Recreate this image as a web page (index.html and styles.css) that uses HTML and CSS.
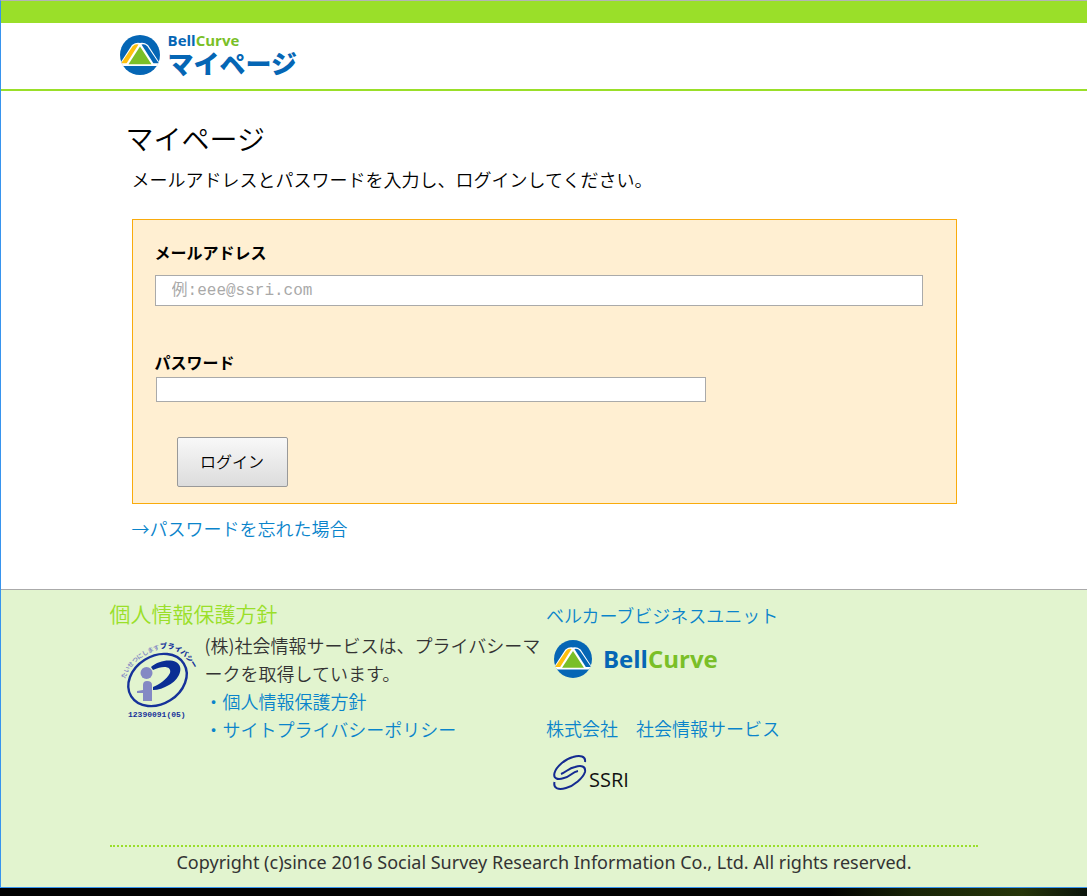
FILE: index.html
```html
<!DOCTYPE html>
<html lang="ja">
<head>
<meta charset="utf-8">
<meta name="viewport" content="width=device-width, initial-scale=1">
<title>マイページ | BellCurve</title>
<link rel="stylesheet" href="styles.css">
</head>
<body>
<svg class="symbols" aria-hidden="true">
  <defs>
    <clipPath id="disc"><circle cx="20" cy="20" r="20"/></clipPath>
  </defs>
  <symbol id="bell" viewBox="0 0 40 40">
    <g clip-path="url(#disc)">
      <rect width="40" height="40" fill="#0566b5"/>
      <path d="M-1 30 L12 10 Q16 7 20 8 Q24 7 28 10 L41 30 Z" fill="#fff"/>
      <path d="M2 27 L12.500 11.500 Q15 8.500 18.500 9.500 L6.500 28.500 H1 Z" fill="#fdc00f"/>
      <path d="M21.500 9.500 Q25 8.500 27.500 11.500 L39 28.500 H33.500 Z" fill="#0566b5"/>
      <path d="M0 28.500 H40 V31 H0 Z" fill="#fff"/>
      <path d="M20 11.500 L31.500 29.300 H8.500 Z" fill="#7abf28"/>
    </g>
  </symbol>
</svg>
<div class="page">
  <header class="header">
    <div class="container">
      <a class="logo" href="#">
        <svg class="logo-mark" aria-hidden="true"><use href="#bell"/></svg>
        <span class="logo-text">
          <span class="logo-brand">Bell<span class="green">Curve</span></span>
          <span class="logo-title">マイページ</span>
        </span>
      </a>
    </div>
  </header>
  <main class="main container">
    <h1 class="title">マイページ</h1>
    <div class="content">
      <p class="lead">メールアドレスとパスワードを入力し、ログインしてください。</p>
      <form class="login">
        <label class="label" for="email">メールアドレス</label>
        <input class="field" id="email" type="email" placeholder="例:eee@ssri.com">
        <label class="label label-next" for="password">パスワード</label>
        <input class="field field-password" id="password" type="password">
        <button class="submit" type="submit">ログイン</button>
      </form>
      <a class="forgot" href="#">→パスワードを忘れた場合</a>
    </div>
  </main>
  <footer class="footer">
    <div class="container">
      <div class="columns">
        <section class="column">
          <h2 class="heading">個人情報保護方針</h2>
          <div class="privacy">
            <svg class="privacy-mark" viewBox="0 0 90 90" role="img" aria-label="プライバシーマーク">
              <defs>
                <path id="arc-left" d="M10 45 Q17 23 48 14"/>
                <path id="arc-right" d="M45 15 Q67 11 80 38"/>
              </defs>
              <text class="mark-light"><textPath href="#arc-left">たいせつにします</textPath></text>
              <text class="mark-bold"><textPath href="#arc-right">プライバシー</textPath></text>
              <ellipse cx="42.500" cy="46" rx="31" ry="24" transform="rotate(-32 42.500 46)" fill="none" stroke="#16329a" stroke-width="2.400"/>
              <path d="M36 33 C43 27 54 25 61 28 C70 33 64 46 54 51 C49 54 43 56 38 56 L38 53 C44 51 52 45 55 39 C57 32 48 31 38 36 Z" fill="#0b2e94"/>
              <circle cx="31.500" cy="39" r="6" fill="#8489c4"/>
              <path d="M28 51 Q28 47 32 47 Q37 47 37 51 V67 H28 V59 H22 V57 L28 56 Z" fill="#8489c4"/>
              <text class="mark-number" x="13" y="83">12390091(05)</text>
            </svg>
            <div class="privacy-text">
              <p class="privacy-line">(株)社会情報サービスは、プライバシーマークを取得しています。</p>
              <a class="privacy-link" href="#">・個人情報保護方針</a>
              <a class="privacy-link" href="#">・サイトプライバシーポリシー</a>
            </div>
          </div>
        </section>
        <section class="column column-units">
          <a class="unit" href="#">ベルカーブビジネスユニット</a>
          <a class="brand" href="#">
            <svg class="brand-mark" viewBox="0 0 40 40" aria-hidden="true"><use href="#bell"/></svg>
            <span>Bell<span class="green">Curve</span></span>
          </a>
          <a class="unit unit-next" href="#">株式会社　社会情報サービス</a>
          <a class="ssri" href="#">
            <svg class="ssri-mark" viewBox="0 0 34 38" aria-hidden="true" fill="none" stroke="#142b91" stroke-width="2">
              <path d="M32 8 C33 2 27 1 20 3 C12 5 3 13 1.500 19 C0 25 5 26 11 24 C17 23 19 18 25 17"/>
              <path d="M1.500 28 C0 35 6 36 13 34 C21 32 30 24 32 18 C33 12 28 11 22 13 C16 14 13 18 8 20"/>
            </svg>
            <span class="ssri-name">SSRI</span>
          </a>
        </section>
      </div>
      <p class="copyright">Copyright (c)since 2016 Social Survey Research Information Co., Ltd. All rights reserved.</p>
    </div>
  </footer>
</div>
</body>
</html>
```
FILE: styles.css
```css
* { box-sizing: border-box; }

body {
  margin: 0;
  min-height: 100vh;
  background: linear-gradient(90deg, #000 76%, #182407 84%, #263509 94%, #0b140b);
  color: #000;
  font-family: "Noto Sans CJK JP", sans-serif;
  font-size: 18px;
  font-weight: 350;
  line-height: 28px;
}

h1, h2, p { margin: 0; font-weight: inherit; }
a { color: #0a84cb; text-decoration: none; }

.symbols { position: absolute; width: 0; height: 0; }
.green { color: #7abf28; }

.page {
  background: #fff;
  border-top: 1px solid #b4b4b4;
  border-left: 1px solid #3794ee;
  border-bottom: 1px solid #3794ee;
}

.container { width: 80%; margin: 0 auto; }

.header {
  border-top: 22px solid #9adf29;
  border-bottom: 2px solid #9adf29;
}

.logo {
  display: flex;
  gap: 8px;
  padding: 7px 0 11px 10px;
  color: #0566b5;
  font-weight: 700;
}
.logo-mark { width: 40px; height: 40px; margin-top: 5px; }
.logo-text { display: flex; flex-direction: column; }
.logo-brand {
  font-family: "Open Sans", sans-serif;
  font-size: 15px;
  font-weight: 700;
  line-height: 20px;
}
.logo-title { font-size: 26px; line-height: 26px; font-weight: 900; }

.logo-text { height: 48px; }

.main { padding: 27px 0 47px; }
.title { padding-left: 16px; font-size: 28px; line-height: 40px; }
.content { padding: 7px 21px 0 22px; }

.login {
  display: flex;
  flex-direction: column;
  align-items: flex-start;
  margin: 26px 0 10px;
  padding: 20px 33px 16px 22px;
  background: #ffefd2;
  border: 1px solid #f9ab0c;
}
.label { font-size: 16px; line-height: 24px; font-weight: 700; }
.label-next { margin-top: 44px; }
.field {
  width: 100%;
  height: 31px;
  margin-top: 11px;
  padding: 0 16px;
  background: #fff;
  border: 1px solid #aaa;
  border-radius: 0;
  font-family: "Liberation Mono", "Noto Sans CJK JP", monospace;
  font-size: 16px;
}
.field::placeholder { color: #a9a9a9; opacity: 1; }
.field-password { width: 550px; max-width: 100%; height: 25px; margin: 3px 0 0 1px; }
.submit {
  min-width: 111px;
  height: 50px;
  margin: 35px 0 0 22px;
  padding: 0 22px 3px;
  background: linear-gradient(#f8f8f8, #dcdcdc);
  border: 1px solid #999;
  border-radius: 2px;
  color: #000;
  font: inherit;
  font-size: 16px;
}
.forgot { display: block; }

.footer {
  padding: 7px 0 10px;
  background: #e2f4cf;
  border-top: 1px solid #aaa;
  color: #333;
}
.columns { display: flex; }
.column { width: 50%; }
.column-units { padding: 4px 0 0 2px; }
.heading { color: #9adf29; font-size: 21px; line-height: 32px; }

.privacy { display: flex; align-items: flex-start; padding: 2px 0 0 5px; }
.privacy-mark { flex: none; width: 90px; height: 90px; margin-top: 3px; overflow: visible; }
.privacy-text { display: flex; flex-direction: column; }
.privacy-line { line-break: anywhere; }
.mark-light { fill: #8489c4; font-size: 6px; font-weight: 700; }
.mark-bold { fill: #16329a; font-size: 7px; font-weight: 900; }
.mark-number { fill: #16329a; font: 700 8px "Liberation Mono", monospace; }

.unit { display: block; }
.unit-next { margin-top: 36px; }
.brand {
  display: flex;
  align-items: center;
  gap: 11px;
  margin-top: 11px;
  padding-left: 8px;
  color: #0566b5;
  font-family: "Open Sans", sans-serif;
  font-size: 24px;
  font-weight: 700;
}
.brand-mark { width: 38px; height: 38px; }
.ssri {
  display: flex;
  align-items: flex-end;
  gap: 2px;
  margin-top: 12px;
  padding-left: 7px;
  color: #111;
}
.ssri-mark { width: 34px; height: 38px; }
.ssri-name { font-family: "Open Sans", sans-serif; font-size: 20px; line-height: 24px; font-weight: 400; }

.copyright {
  margin-top: 53px;
  border-top: 2px dotted #9adf29;
  font-family: "Noto Sans", sans-serif;
  font-weight: 400;
  line-height: 30px;
  text-align: center;
}
```
